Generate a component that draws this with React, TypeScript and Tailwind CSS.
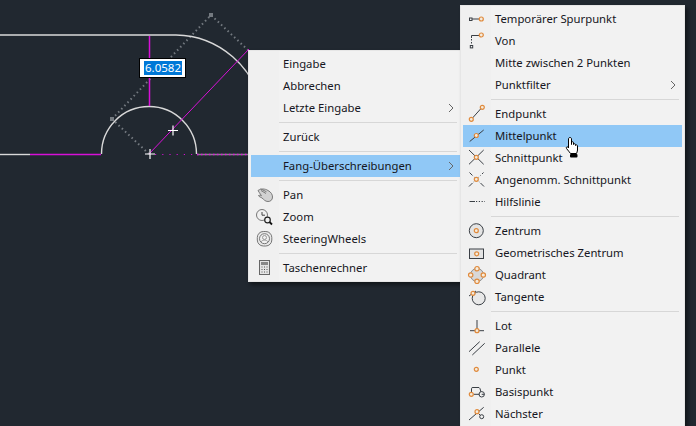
import type { ReactNode } from 'react';

type Item = { label?: string; icon?: ReactNode; arrow?: boolean; active?: boolean; sep?: boolean };

const ORANGE = '#e08a3c';
const DARK = '#3a3f45';

function Dot({ x, y, r = 2 }: { x: number; y: number; r?: number }) {
  return <circle cx={x} cy={y} r={r} fill="#f4ecdf" stroke={ORANGE} strokeWidth="1.2" />;
}

function Ico({ children }: { children: ReactNode }) {
  return (
    <svg width="22" height="22" viewBox="0 0 22 22" fill="none" stroke={DARK} strokeWidth="1">
      {children}
    </svg>
  );
}

const snapIcons = {
  temp: (
    <Ico>
      <rect x="3.5" y="10" width="2.5" height="2.5" />
      <path d="M6 11h7" />
      <Dot x={15.3} y={11} />
    </Ico>
  ),
  from: (
    <Ico>
      <path d="M13 5.5H5.5V8" />
      <path d="M5.5 9v6" strokeDasharray="1.5 1.5" />
      <rect x="4.3" y="15.5" width="2.4" height="2.4" />
      <Dot x={15.3} y={5} />
    </Ico>
  ),
  end: (
    <Ico>
      <path d="M6.5 15L15 5.5" />
      <Dot x={16.3} y={4.3} />
      <Dot x={5.3} y={16.3} />
    </Ico>
  ),
  mid: (
    <Ico>
      <path d="M3.7 16.5L17.7 5" />
      <Dot x={10.3} y={10.5} />
    </Ico>
  ),
  inter: (
    <Ico>
      <path d="M3 3l14.7 14.3M17.7 3L3 17.3" />
      <Dot x={10.3} y={10.3} />
    </Ico>
  ),
  apparent: (
    <Ico>
      <path d="M3.5 3.5l2.5 2.5M14.5 14l3.5 3.5M17.5 3.5L16 5M6.500 14l-3.500 3.500" />
      <path d="M6 6l8.500 8M15 6l-8.500 8" strokeDasharray="1.500 1.500" opacity="0.5" />
      <Dot x={10.3} y={10.3} />
    </Ico>
  ),
  ext: (
    <Ico>
      <path d="M3.5 10.5H9" />
      <path d="M10 10.5h9" strokeDasharray="1.2 1.6" />
    </Ico>
  ),
  center: (
    <Ico>
      <circle cx="10.3" cy="10.7" r="7" fill="#e4e4e4" />
      <Dot x={10.3} y={10.7} />
    </Ico>
  ),
  geo: (
    <Ico>
      <rect x="3.5" y="7" width="14" height="9.5" fill="#e4e4e4" />
      <Dot x={10.7} y={11.8} />
    </Ico>
  ),
  quad: (
    <Ico>
      <circle cx="11" cy="11" r="6.5" fill="#d8d8d8" stroke="#888" />
      <Dot x={11} y={4.7} r={2.2} />
      <Dot x={11} y={17.3} r={2.2} />
      <Dot x={4.7} y={11} r={2.2} />
      <Dot x={17.3} y={11} r={2.2} />
    </Ico>
  ),
  tan: (
    <Ico>
      <circle cx="12.7" cy="12.3" r="6.5" fill="#e8e8e8" />
      <path d="M3 10l7-5" />
      <Dot x={7} y={7.3} />
    </Ico>
  ),
  perp: (
    <Ico>
      <path d="M11 5v9M4 15.7h14" />
      <Dot x={11} y={15.7} />
    </Ico>
  ),
  par: (
    <Ico>
      <path d="M3 14.7L13.7 4.7M6.3 18L18.7 6.3" />
    </Ico>
  ),
  node: (
    <Ico>
      <Dot x={10.3} y={10.3} />
    </Ico>
  ),
  base: (
    <Ico>
      <path d="M5.5 11V7.5Q5.5 6.5 7 6.5h6Q14 6.5 15 11" />
      <path d="M7.5 13.3h6" />
      <circle cx="15.7" cy="13.3" r="2.7" />
      <path d="M15.7 13.3h2.7" />
      <Dot x={5.3} y={13.3} />
    </Ico>
  ),
  near: (
    <Ico>
      <path d="M3 17L17.7 4.3" />
      <circle cx="15.7" cy="13.7" r="2" />
      <path d="M12.5 10.5l2 2" />
      <Dot x={11} y={8.7} />
    </Ico>
  ),
};

const mainIcons = {
  pan: (
    <svg width="22" height="22" viewBox="0 0 22 22" fill="#d2d2d2" stroke="#7a7a7a" strokeWidth="1">
      <path d="M4 6.500c3-2 7-2 10 0 3 1.500 4.500 4 4.500 6.500 0 3-2 4.500-4.500 4.500-3 0-4-2-6-3.500-1-.8-3-1-3.500-2.500 1-.5 2.500 0 3 .2C6 9.500 4.800 8 4 6.500z" />
      <path d="M7 6.500l5 3M6.500 4.800l6 3" fill="none" />
    </svg>
  ),
  zoom: (
    <Ico>
      <circle cx="8" cy="9" r="5.500" stroke="#777" />
      <path d="M8 6v3.200h3" stroke="#444" />
      <circle cx="13.500" cy="14" r="2.800" fill="#f0f0f0" stroke="#222" strokeWidth="1.200" />
      <path d="M15.500 16l2.500 2.500" stroke="#111" strokeWidth="1.800" />
    </Ico>
  ),
  wheel: (
    <Ico>
      <rect x="3.300" y="3.500" width="14.500" height="14.500" rx="6" stroke="#777" fill="#e8e8e8" />
      <circle cx="10.500" cy="10.700" r="5" fill="#f0f0f0" stroke="#777" />
      <circle cx="10.500" cy="9.500" r="2" stroke="#999" />
      <path d="M7 14c1-2.500 6-2.500 7 0" stroke="#999" />
    </Ico>
  ),
  calc: (
    <Ico>
      <rect x="5.500" y="3.500" width="10" height="14" fill="#e4e4e4" stroke="#666" />
      <rect x="7" y="5" width="7" height="3" fill="#888" stroke="none" />
      <path
        d="M7.500 10h1M10 10h1M12.500 10h1M7.500 12.500h1M10 12.500h1M12.500 12.500h1M7.500 15h1M10 15h1M12.500 15h1"
        stroke="#555"
      />
    </Ico>
  ),
};

const mainItems: Item[] = [
  { label: 'Eingabe' },
  { label: 'Abbrechen' },
  { label: 'Letzte Eingabe', arrow: true },
  { sep: true },
  { label: 'Zurück' },
  { sep: true },
  { label: 'Fang-Überschreibungen', arrow: true, active: true },
  { sep: true },
  { label: 'Pan', icon: mainIcons.pan },
  { label: 'Zoom', icon: mainIcons.zoom },
  { label: 'SteeringWheels', icon: mainIcons.wheel },
  { sep: true },
  { label: 'Taschenrechner', icon: mainIcons.calc },
];

const snapItems: Item[] = [
  { label: 'Temporärer Spurpunkt', icon: snapIcons.temp },
  { label: 'Von', icon: snapIcons.from },
  { label: 'Mitte zwischen 2 Punkten' },
  { label: 'Punktfilter', arrow: true },
  { sep: true },
  { label: 'Endpunkt', icon: snapIcons.end },
  { label: 'Mittelpunkt', icon: snapIcons.mid, active: true },
  { label: 'Schnittpunkt', icon: snapIcons.inter },
  { label: 'Angenomm. Schnittpunkt', icon: snapIcons.apparent },
  { label: 'Hilfslinie', icon: snapIcons.ext },
  { sep: true },
  { label: 'Zentrum', icon: snapIcons.center },
  { label: 'Geometrisches Zentrum', icon: snapIcons.geo },
  { label: 'Quadrant', icon: snapIcons.quad },
  { label: 'Tangente', icon: snapIcons.tan },
  { sep: true },
  { label: 'Lot', icon: snapIcons.perp },
  { label: 'Parallele', icon: snapIcons.par },
  { label: 'Punkt', icon: snapIcons.node },
  { label: 'Basispunkt', icon: snapIcons.base },
  { label: 'Nächster', icon: snapIcons.near },
];

function MenuRows({ items }: { items: Item[] }) {
  return (
    <>
      {items.map((it, i) =>
        it.sep ? (
          <div key={i} className="flex h-[7px] items-center pl-[28px] pr-[3px]">
            <div className="h-[1px] w-full bg-[#d7d7d7]" />
          </div>
        ) : (
          <div
            key={i}
            className={`flex h-[22px] items-center ${it.active ? 'bg-[#90c8f6]' : ''}`}
          >
            <div className="flex w-[28px] shrink-0 items-center justify-center">{it.icon}</div>
            <span className="flex-1 pb-[1px] pl-[4px] text-[11.3px] leading-[21px] text-[#161622]">{it.label}</span>
            {it.arrow && (
              <svg width="6" height="10" viewBox="0 0 6 10" fill="none" stroke="#666" className="mr-[6px]">
                <path d="M1 1l4 4-4 4" />
              </svg>
            )}
          </div>
        ),
      )}
    </>
  );
}

function Canvas() {
  return (
    <svg width="696" height="426" viewBox="0 0 696 426" fill="none" className="absolute left-0 top-0">
      <g stroke="#747a80" strokeWidth="2" strokeDasharray="1.500 3">
        <path d="M112 119L211 15L250 52" />
        <path d="M112 119L149 154" />
      </g>
      <rect x="110" y="117" width="4" height="4" fill="#747a80" />
      <rect x="209" y="13" width="4" height="4" fill="#747a80" />
      <g stroke="#d9d9d9" strokeWidth="1.400">
        <path d="M0 35H176A88.600 88.600 0 0 1 262 110" />
        <path d="M101.500 154A47.500 47.500 0 0 1 196.500 154" />
        <path d="M0 154.500H30" />
      </g>
      <g stroke="#d810d8">
        <path d="M149.500 36V106" strokeWidth="1.500" />
        <path d="M149 154L249 49" strokeWidth="1" />
        <path d="M30 154.500H101" strokeWidth="1.400" />
      </g>
      <path d="M197 154.500H250" stroke="#8f8492" strokeWidth="1.500" />
      <path d="M197 154.500H250" stroke="#e010e0" strokeWidth="1.500" strokeDasharray="1.500 2.500" />
      <path d="M155 154.500H196" stroke="#d010d0" strokeWidth="1.200" strokeDasharray="1.200 6" />
      <path d="M145 154h10M150 149v10M168 130.500h10M173 125.500v10" stroke="#fff" strokeWidth="1.200" />
    </svg>
  );
}

function HandCursor() {
  return (
    <svg width="16" height="24" viewBox="0 0 16 24" className="absolute left-[565px] top-[136px]">
      <path
        d="M5 1.500c1 0 1.500.7 1.500 1.500v5.500V6.500c0-1 2-1 2 0v2c0-1 2-1 2 0v1c0-1 2-.8 2 .3V14c0 1.500-.7 2.500-1 3.500H5.500C4.500 16 3 14.500 1.500 12.500c-.8-1.200.7-2.300 1.600-1.300L3.500 12V3c0-1 .7-1.500 1.500-1.500z"
        fill="#fff"
        stroke="#000"
        strokeWidth="1"
      />
      <rect x="5" y="18" width="7.500" height="3.500" rx="1" fill="#000" />
    </svg>
  );
}

export default function App() {
  return (
    <div className="relative h-[426px] w-[696px] overflow-hidden bg-[#212830] font-['Noto_Sans','Open_Sans',sans-serif]">
      <Canvas />

      <div className="absolute left-[139px] top-[58px] flex h-[20px] w-[47px] items-center border border-black bg-white pl-[4px]">
        <span className="bg-[#0078d7] px-[1px] text-[11.5px] leading-[14px] text-white">6.0582</span>
      </div>

      <div className="absolute left-[248px] top-[50px] h-[232px] w-[213px] border border-[#e6e6e6] bg-[#f2f2f2] pb-[3px] pl-[2px] pt-[2px] shadow-[2px_3px_4px_rgba(0,0,0,0.45)]">
        <div className="absolute bottom-0 left-0 top-0 w-[30px] bg-[#f0f0f0]" />
        <div className="relative">
          <MenuRows items={mainItems} />
        </div>
      </div>

      <div className="absolute left-[460px] top-[5px] h-[430px] w-[225px] border border-[#e6e6e6] bg-[#f2f2f2] px-[2px] pt-[2px] shadow-[3px_3px_4px_rgba(0,0,0,0.45)]">
        <div className="absolute bottom-0 left-0 top-0 w-[30px] bg-[#f0f0f0]" />
        <div className="relative">
          <MenuRows items={snapItems} />
        </div>
      </div>

      <HandCursor />
    </div>
  );
}
